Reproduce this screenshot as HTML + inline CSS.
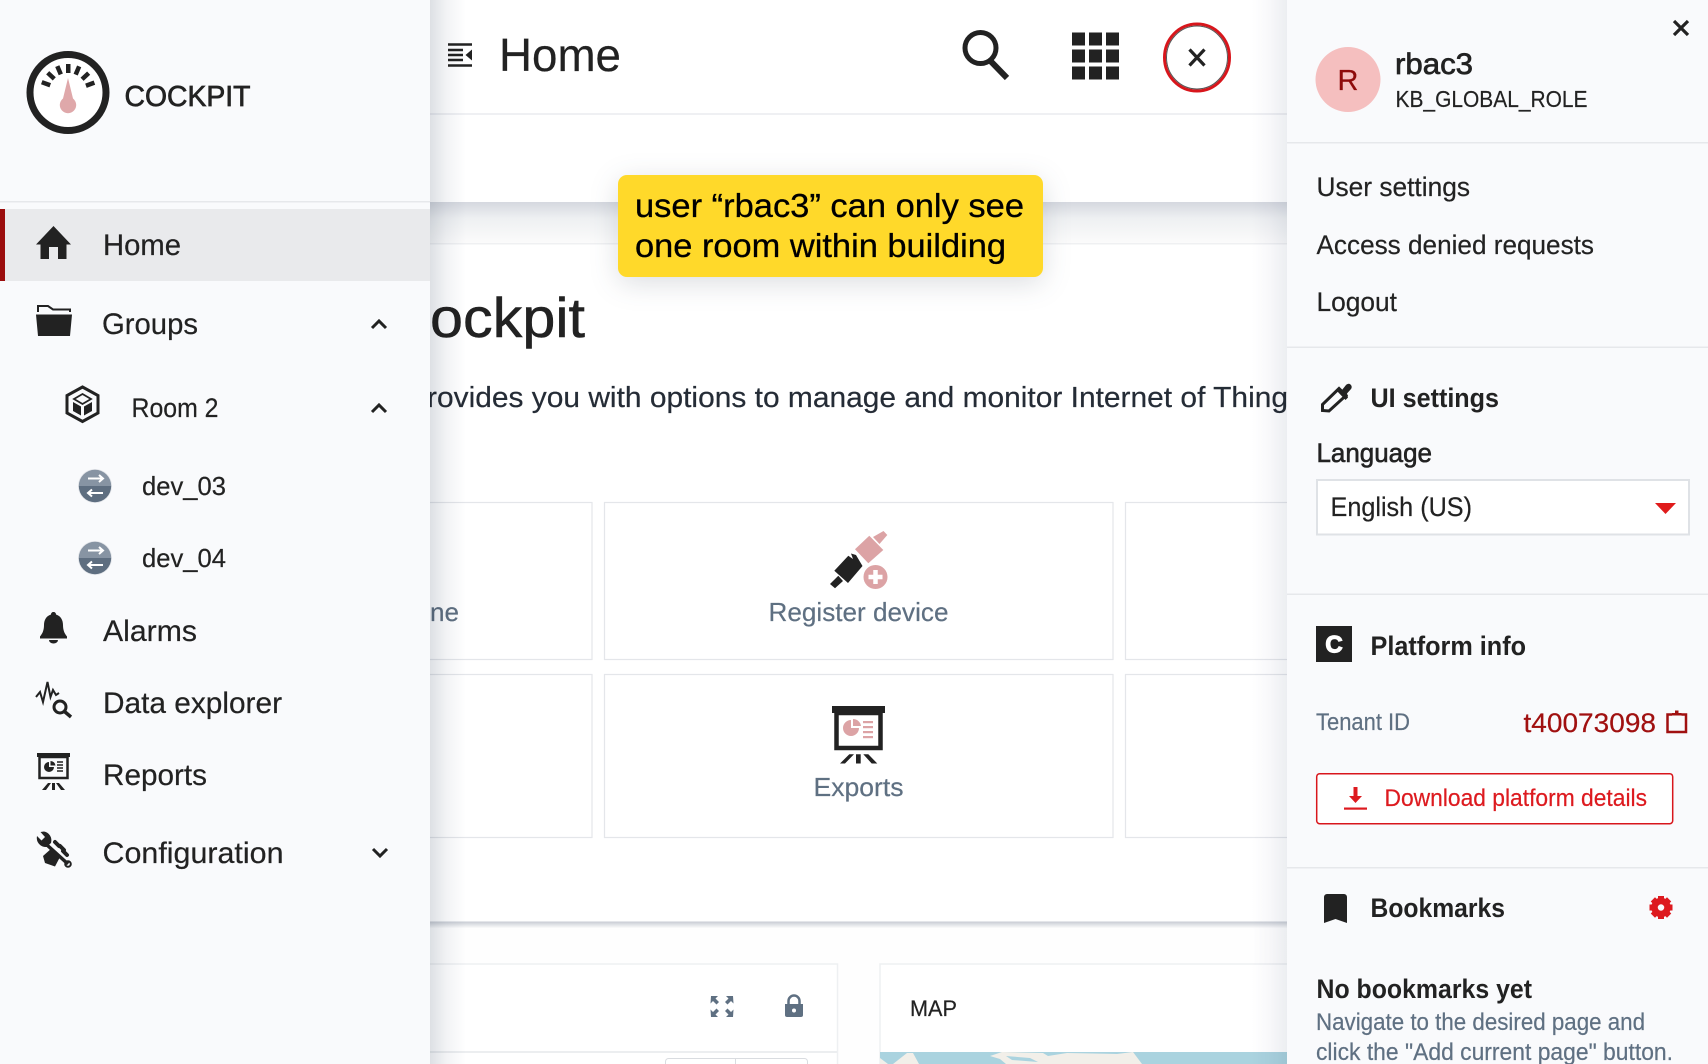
<!DOCTYPE html>
<html lang="en">
<head>
<meta charset="utf-8">
<title>Cockpit Home</title>
<style>
html,body{margin:0;padding:0;background:#fff;width:1708px;height:1064px;overflow:hidden}
svg{display:block}
text{font-family:"Liberation Sans",sans-serif;fill:#222;stroke:#222;stroke-width:.2}
.m{stroke:#222;stroke-width:.5}
.b{font-weight:700;stroke-width:0}
.g{fill:#5f7082;stroke:#5f7082}
.y{fill:#000;stroke:#000;stroke-width:.3}
.red{fill:#dd1a1f;stroke:#dd1a1f}
.drk{fill:#a01010;stroke:#a01010}
.mult{mix-blend-mode:multiply}
</style>
</head>
<body>
<svg width="1708" height="1064" viewBox="0 0 1708 1064" xmlns="http://www.w3.org/2000/svg">
<defs>
<linearGradient id="sh1" x1="0" y1="0" x2="0" y2="1"><stop offset="0" stop-color="#d5d8df"/><stop offset=".4" stop-color="#eef0f2"/><stop offset="1" stop-color="#fbfbfb"/></linearGradient>
<linearGradient id="sh2" x1="0" y1="0" x2="0" y2="1"><stop offset="0" stop-color="#c6cbd3"/><stop offset=".3" stop-color="#d8dbe0"/><stop offset="1" stop-color="#fff"/></linearGradient>
<linearGradient id="sl" x1="0" y1="0" x2="1" y2="0"><stop offset="0" stop-color="#dde0e4"/><stop offset=".45" stop-color="#f2f3f5"/><stop offset="1" stop-color="#fff"/></linearGradient>
<linearGradient id="sr" x1="1" y1="0" x2="0" y2="0"><stop offset="0" stop-color="#eceef1"/><stop offset=".5" stop-color="#f8f8fa"/><stop offset="1" stop-color="#fff"/></linearGradient>
<clipPath id="main"><rect x="430" y="0" width="857" height="1064"/></clipPath>
</defs>

<!-- MAIN CONTENT -->
<g clip-path="url(#main)">
<rect x="430" y="0" width="857" height="1064" fill="#fff"/>
<rect x="430" y="113" width="857" height="2" fill="#eff0f3"/>
<rect x="430" y="202" width="857" height="41" fill="url(#sh1)"/>
<rect x="430" y="243" width="857" height="1.500" fill="#eff0f2"/>

<text x="430" y="337" font-size="56" textLength="155" lengthAdjust="spacingAndGlyphs" class="m">ockpit</text>
<text x="427" y="407" font-size="29" textLength="861" lengthAdjust="spacingAndGlyphs" style="fill:#252c36;stroke:#252c36">rovides you with options to manage and monitor Internet of Thing</text>

<!-- cards -->
<g fill="#fff" stroke="#e4e6ea" stroke-width="1.2">
<rect x="400" y="502.500" width="192" height="157"/>
<rect x="604.500" y="502.500" width="508.500" height="157"/>
<rect x="1125.500" y="502.500" width="200" height="157"/>
<rect x="400" y="674.500" width="192" height="163"/>
<rect x="604.500" y="674.500" width="508.500" height="163"/>
<rect x="1125.500" y="674.500" width="200" height="163"/>
</g>
<text x="430" y="621" font-size="26" textLength="29" lengthAdjust="spacingAndGlyphs" class="g">ne</text>
<text x="768.500" y="621" font-size="26" textLength="180" lengthAdjust="spacingAndGlyphs" class="g">Register device</text>
<text x="813.500" y="796" font-size="26" textLength="90" lengthAdjust="spacingAndGlyphs" class="g">Exports</text>

<!-- register device icon -->
<g fill="#dca3a5">
<path d="M855 549.300 L869.300 535.700 L883.300 550 L868.300 563.300 Z"/>
<path d="M873 537 L883.500 531 L887.300 535 L879.500 544 Z"/>
<circle cx="875.500" cy="577" r="12"/>
</g>
<path d="M875.500 570 V584 M868.500 577 H882.500" stroke="#fff" stroke-width="4.500" fill="none"/>
<g fill="#222">
<path d="M834.300 570.700 L848.300 555.700 L853 559 L851 553.500 L856 555 L862.500 566 L848 583 Z"/>
<path d="M830 584 L838.300 575.700 L843 581 L835 588.300 Z"/>
</g>
<!-- exports icon -->
<rect x="832" y="706" width="53" height="7" fill="#222"/>
<rect x="836.500" y="713" width="44" height="35" fill="#fff" stroke="#222" stroke-width="4.500"/>
<g fill="#dca3a5">
<path d="M851 720 a8 8 0 1 0 8 8 h-8 Z"/>
<path d="M853 719 a8 8 0 0 1 8 7 h-8 Z"/>
<rect x="863" y="721" width="10" height="2.200"/>
<rect x="863" y="726" width="10" height="2.200"/>
<rect x="863" y="731" width="10" height="2.200"/>
<rect x="863" y="736" width="10" height="2.200"/>
</g>
<path d="M840 763.500 L849.300 754.300 H854 L845 763.500 Z M856 754.300 H860.700 V763.500 H856 Z M863.300 754.300 H868.300 L877.300 763.500 H871.700 Z" fill="#222"/>

<!-- lower section -->
<rect x="430" y="921.500" width="857" height="7" fill="url(#sh2)"/>
<rect x="430" y="928.500" width="857" height="135.500" fill="#fefefe"/>
<rect x="420" y="964" width="417.500" height="110" fill="#fff" stroke="#eef0f2" stroke-width="1.500"/>
<rect x="880" y="964" width="420" height="110" fill="#fff" stroke="#eef0f2" stroke-width="1.500"/>
<rect x="420" y="1051" width="417" height="2" fill="#eceef0"/>
<rect x="665.500" y="1058.500" width="142" height="12" rx="3" fill="#fff" stroke="#d9dce0"/>
<path d="M735.500 1058 V1064" stroke="#d9dce0"/>
<text x="910" y="1016" font-size="22" textLength="47" lengthAdjust="spacingAndGlyphs">MAP</text>
<g fill="#5f7082">
<path d="M711 996 h7 l-2.500 2.500 l3.500 3.500 l-2.500 2.500 l-3.500 -3.500 l-2.500 2.500 Z"/>
<path d="M733 996 h-7 l2.500 2.500 l-3.500 3.500 l2.500 2.500 l3.500 -3.500 l2.500 2.500 Z"/>
<path d="M711 1017 h7 l-2.500 -2.500 l3.500 -3.500 l-2.500 -2.500 l-3.500 3.500 l-2.500 -2.500 Z"/>
<path d="M733 1017 h-7 l2.500 -2.500 l-3.500 -3.500 l2.500 -2.500 l3.500 3.500 l2.500 -2.500 Z"/>
<path d="M785 1004 h18 v11 a2 2 0 0 1 -2 2 h-14 a2 2 0 0 1 -2 -2 Z"/>
</g>
<path d="M788.500 1004 v-3 a5.500 5.500 0 0 1 11 0 v3" fill="none" stroke="#5f7082" stroke-width="2.500"/>
<circle cx="794" cy="1010.500" r="2" fill="#fff"/>
<rect x="880" y="1052" width="407" height="12" fill="#aad3df"/>
<path d="M880 1064 V1058 L888 1064 Z M893 1064 L907 1053 L913 1053 L919 1064 Z M990 1056 L1002 1052 L1043 1053 L1048 1056 L1067 1053 L1117 1054 L1133 1052 L1142 1064 L1006 1064 L1000 1059 Z" fill="#f2efe9"/>
<path d="M1006 1056 L1030 1058 L1038 1062 L1012 1060 Z" fill="#aad3df"/>

<!-- header -->
<text x="499" y="71" font-size="46" textLength="122" lengthAdjust="spacingAndGlyphs">Home</text>
<g stroke="#222" stroke-width="2.500" fill="none">
<path d="M448 44.500 H472 M448 50 H463 M448 55 H463 M448 60 H463 M448 65.500 H472"/>
</g>
<path d="M472 49.500 V60.500 L465.500 55 Z" fill="#222"/>
<circle cx="980.500" cy="48" r="15.500" fill="none" stroke="#222" stroke-width="5"/>
<path d="M990.500 61 L1007 78" stroke="#222" stroke-width="6"/>
<g fill="#222">
<rect x="1072" y="32.500" width="13" height="13"/><rect x="1089" y="32.500" width="13" height="13"/><rect x="1106" y="32.500" width="13" height="13"/>
<rect x="1072" y="49.500" width="13" height="13"/><rect x="1089" y="49.500" width="13" height="13"/><rect x="1106" y="49.500" width="13" height="13"/>
<rect x="1072" y="66.500" width="13" height="13"/><rect x="1089" y="66.500" width="13" height="13"/><rect x="1106" y="66.500" width="13" height="13"/>
</g>
<ellipse cx="1197" cy="57.500" rx="32.500" ry="33.500" fill="#fff" stroke="#d8161c" stroke-width="3"/>
<ellipse cx="1197" cy="57.500" rx="30.500" ry="31.500" fill="none" stroke="#555" stroke-width="1"/>
<path d="M1189.500 49.500 L1204.500 65.500 M1204.500 49.500 L1189.500 65.500" stroke="#222" stroke-width="3.200"/>

<!-- shadows from drawers -->
<rect class="mult" x="430" y="0" width="36" height="1064" fill="url(#sl)"/>
<rect class="mult" x="1252" y="0" width="35" height="1064" fill="url(#sr)"/>

<!-- yellow callout -->
<rect x="618" y="175" width="425" height="102" rx="9" fill="#ffd92a" style="filter:drop-shadow(0 6px 14px rgba(40,50,70,.16))"/>
<text x="635" y="217" font-size="33" textLength="389" lengthAdjust="spacingAndGlyphs" class="y">user “rbac3” can only see</text>
<text x="635" y="257" font-size="33" textLength="371" lengthAdjust="spacingAndGlyphs" class="y">one room within building</text>
</g>

<!-- LEFT SIDEBAR -->
<rect x="0" y="0" width="430" height="1064" fill="#f9fafc"/>
<rect x="0" y="201" width="430" height="1.500" fill="#e6e8eb"/>
<rect x="0" y="209" width="430" height="72" fill="#e9eaec"/>
<rect x="0" y="209" width="5" height="72" fill="#9b0d0d"/>

<circle cx="68" cy="92.500" r="38" fill="#fff" stroke="#222" stroke-width="7"/>
<g fill="#222">
<rect x="66" y="64" width="4.500" height="9" transform="rotate(-70 68 92)"/>
<rect x="66" y="64" width="4.500" height="9" transform="rotate(-47 68 92)"/>
<rect x="66" y="64" width="4.500" height="9" transform="rotate(-23 68 92)"/>
<rect x="66" y="64" width="4.500" height="9"/>
<rect x="66" y="64" width="4.500" height="9" transform="rotate(23 68 92)"/>
<rect x="66" y="64" width="4.500" height="9" transform="rotate(47 68 92)"/>
<rect x="66" y="64" width="4.500" height="9" transform="rotate(70 68 92)"/>
</g>
<path d="M68 78 L63 98.500 A8.200 8.200 0 1 0 73 98.500 Z" fill="#dfa8aa"/>
<text x="124.500" y="106" font-size="29" textLength="126" lengthAdjust="spacingAndGlyphs" class="m" style="stroke-width:.7">COCKPIT</text>

<!-- Home -->
<path d="M53.500 226 L71 244.500 H66.500 V259 H58 V247 H49 V259 H40.500 V244.500 H36 Z" fill="#222"/>
<text x="103" y="255" font-size="30" textLength="78" lengthAdjust="spacingAndGlyphs">Home</text>

<!-- Groups -->
<path d="M38 312 V306 H48 L53 309.500 H70 V312" fill="none" stroke="#222" stroke-width="2"/>
<path d="M36 314.500 H72 L70 336 H38 Z" fill="#222"/>
<text x="102" y="334" font-size="30" textLength="96" lengthAdjust="spacingAndGlyphs">Groups</text>
<path d="M372 328 L379 321 L386 328" fill="none" stroke="#222" stroke-width="3"/>

<!-- Room 2 -->
<path d="M82.500 387 L98 395.500 V413 L82.500 421.500 L67 413 V395.500 Z" fill="none" stroke="#222" stroke-width="3"/>
<path d="M82.500 394 L91 399 L82.500 404 L74 399 Z" fill="none" stroke="#222" stroke-width="1.800"/>
<path d="M73 402 L81 406.500 V415.500 L73 411 Z M92 402 L84 406.500 V415.500 L92 411 Z" fill="#222"/>
<text x="131.500" y="417" font-size="27" textLength="87" lengthAdjust="spacingAndGlyphs">Room 2</text>
<path d="M372 412 L379 405 L386 412" fill="none" stroke="#222" stroke-width="3"/>

<!-- devices -->
<g>
<circle cx="95" cy="486" r="17" fill="#e4e6ea"/>
<path d="M78.800 486 a16.200 16.200 0 0 1 32.400 0 Z" fill="#8794a3"/>
<path d="M78.800 486 a16.200 16.200 0 0 0 32.400 0 Z" fill="#5e6e80"/>
<path d="M88 478.500 H103 M99 475 L103 478.500 L99 482 M103 493 H88 M92 489.500 L88 493 L92 496.500" fill="none" stroke="#fff" stroke-width="2"/>
</g>
<g transform="translate(0 72)">
<circle cx="95" cy="486" r="17" fill="#e4e6ea"/>
<path d="M78.800 486 a16.200 16.200 0 0 1 32.400 0 Z" fill="#8794a3"/>
<path d="M78.800 486 a16.200 16.200 0 0 0 32.400 0 Z" fill="#5e6e80"/>
<path d="M88 478.500 H103 M99 475 L103 478.500 L99 482 M103 493 H88 M92 489.500 L88 493 L92 496.500" fill="none" stroke="#fff" stroke-width="2"/>
</g>
<text x="142" y="495" font-size="26" textLength="84" lengthAdjust="spacingAndGlyphs">dev_03</text>
<text x="142" y="567" font-size="26" textLength="84" lengthAdjust="spacingAndGlyphs">dev_04</text>

<!-- Alarms -->
<path d="M53.500 612 c-1.500 0 -2.500 1 -2.500 2.500 c-5 1.500 -7 6 -7 10.500 c0 6 -2 9 -4 11.500 v2 h27 v-2 c-2 -2.500 -4 -5.500 -4 -11.500 c0 -4.500 -2 -9 -7 -10.500 c0 -1.500 -1 -2.500 -2.500 -2.500 Z M49 640 h9 a4.500 3.500 0 0 1 -9 0 Z" fill="#222"/>
<text x="103" y="641" font-size="30" textLength="94" lengthAdjust="spacingAndGlyphs">Alarms</text>

<!-- Data explorer -->
<path d="M36 697 L40 692 L43 702 L47.500 682 L50.500 697 L53 690 L56 695 L59 693" fill="none" stroke="#222" stroke-width="2"/>
<circle cx="60" cy="707" r="6" fill="none" stroke="#222" stroke-width="3"/>
<path d="M64.500 711.500 L71 717" stroke="#222" stroke-width="3.500"/>
<text x="103" y="713" font-size="30" textLength="179" lengthAdjust="spacingAndGlyphs">Data explorer</text>

<!-- Reports -->
<rect x="37" y="753" width="33" height="4" fill="#222"/>
<rect x="39.500" y="757" width="28" height="21" fill="none" stroke="#222" stroke-width="2.500"/>
<path d="M49 762 a5 5 0 1 0 5 5 h-5 Z M50.500 761 a5 5 0 0 1 5 4.500 h-5 Z" fill="#222"/>
<path d="M57 762 H63 M57 765 H63 M57 768 H63 M57 771 H63" stroke="#222" stroke-width="1.500"/>
<path d="M42 790 L48 783 H51 L46 790 Z M52 783 H55 V790 H52 Z M56 783 H59 L65 790 H61 Z" fill="#222"/>
<text x="103" y="785" font-size="30" textLength="104" lengthAdjust="spacingAndGlyphs">Reports</text>

<!-- Configuration -->
<path d="M37 836 A9 9 0 0 0 46.500 847 L51 843 A9 9 0 0 0 44 831.500 L40.500 832 L45 837 L41.500 840.500 Z" fill="#222"/>
<path d="M47 845 L68 864" stroke="#222" stroke-width="3.500"/>
<circle cx="68" cy="864" r="2.800" fill="none" stroke="#222" stroke-width="2"/>
<path d="M43 856 L52 848 L60 857 L55 866.500 L45 863 Z" fill="#222"/>
<path d="M55 842 L59 846 M60 846 L64 850 M63 851 L67 855" stroke="#222" stroke-width="4" stroke-linecap="round"/>
<text x="102.500" y="863" font-size="30" textLength="181" lengthAdjust="spacingAndGlyphs">Configuration</text>
<path d="M373 849 L380 856 L387 849" fill="none" stroke="#222" stroke-width="3"/>

<!-- RIGHT DRAWER -->
<rect x="1287" y="0" width="421" height="1064" fill="#f9fafc"/>
<path d="M1674 21 L1688 35 M1688 21 L1674 35" stroke="#222" stroke-width="3.200"/>
<circle cx="1348" cy="79.500" r="32.500" fill="#f5bfbf"/>
<text x="1348" y="90" font-size="29" text-anchor="middle" style="fill:#8e0b0b;stroke:#8e0b0b">R</text>
<text x="1395" y="74" font-size="30" textLength="78" lengthAdjust="spacingAndGlyphs" class="m" style="stroke-width:.7">rbac3</text>
<text x="1395.500" y="107" font-size="23" textLength="192" lengthAdjust="spacingAndGlyphs">KB_GLOBAL_ROLE</text>
<rect x="1287" y="142" width="421" height="1.500" fill="#e6e8eb"/>
<text x="1316.500" y="196" font-size="27" textLength="153.500" lengthAdjust="spacingAndGlyphs">User settings</text>
<text x="1316.500" y="254" font-size="27" textLength="277.500" lengthAdjust="spacingAndGlyphs">Access denied requests</text>
<text x="1316.500" y="311" font-size="27" textLength="80.500" lengthAdjust="spacingAndGlyphs">Logout</text>
<rect x="1287" y="346.500" width="421" height="1.500" fill="#e6e8eb"/>

<!-- UI settings -->
<path d="M1322.500 410.500 V404.500 L1339 388.500 L1346 395.500 L1329 411 Z" fill="#f9fafc" stroke="#222" stroke-width="3"/>
<path d="M1337 391 L1342 390 L1346 385 A2.800 2.800 0 0 1 1351 389 L1347 393.500 L1348 397.500 L1345.500 400 Z" fill="#222"/>
<text x="1370.500" y="407" font-size="27" textLength="128.500" lengthAdjust="spacingAndGlyphs" class="b">UI settings</text>
<text x="1316.500" y="462" font-size="27" textLength="115.500" lengthAdjust="spacingAndGlyphs" class="m" style="stroke-width:.6">Language</text>
<rect x="1317" y="480" width="372" height="54.500" fill="#fff" stroke="#dfe2e6" stroke-width="2"/>
<text x="1330.500" y="516" font-size="27" textLength="141.500" lengthAdjust="spacingAndGlyphs">English (US)</text>
<path d="M1655 503 H1676 L1665.500 514 Z" fill="#e01b1b"/>
<rect x="1287" y="593.500" width="421" height="1.500" fill="#e6e8eb"/>

<!-- Platform info -->
<rect x="1316" y="626" width="36" height="36" fill="#222"/>
<text x="1334" y="652.500" font-size="24" text-anchor="middle" class="b" style="fill:#fff;stroke:#fff;stroke-width:1.200">C</text>
<text x="1370.500" y="655" font-size="27" textLength="155.500" lengthAdjust="spacingAndGlyphs" class="b">Platform info</text>
<text x="1316" y="730" font-size="24" textLength="94" lengthAdjust="spacingAndGlyphs" class="g">Tenant ID</text>
<text x="1523.500" y="732" font-size="27" textLength="132.500" lengthAdjust="spacingAndGlyphs" class="drk">t40073098</text>
<path d="M1672 714.500 H1667.500 V732 H1686 V714.500 H1681.500" fill="none" stroke="#a01010" stroke-width="2.500"/>
<path d="M1672 715.500 V713 H1675 V710.500 H1678.500 V713 H1681.500 V715.500 Z" fill="#a01010"/>
<rect x="1316.700" y="773.700" width="356" height="50" rx="3" fill="#fff" stroke="#d8161c" stroke-width="1.500"/>
<path d="M1355.500 787 V799" stroke="#dd1a1f" stroke-width="4"/>
<path d="M1349 796 H1362 L1355.500 803 Z" fill="#dd1a1f"/>
<rect x="1344" y="807.500" width="23" height="2.200" fill="#dd1a1f"/>
<text x="1384.500" y="806" font-size="24" textLength="262.500" lengthAdjust="spacingAndGlyphs" class="red">Download platform details</text>
<rect x="1287" y="867" width="421" height="1.500" fill="#e6e8eb"/>

<!-- Bookmarks -->
<path d="M1324 897 a3 3 0 0 1 3 -3 h17 a3 3 0 0 1 3 3 v26 l-11.500 -4 l-11.500 4 Z" fill="#222"/>
<text x="1370.500" y="917" font-size="27" textLength="134.500" lengthAdjust="spacingAndGlyphs" class="b">Bookmarks</text>
<g fill="#dd1a1f">
<circle cx="1661" cy="907.500" r="6.500" fill="none" stroke="#dd1a1f" stroke-width="6.500"/>
<rect x="1658" y="896" width="6" height="5"/>
<rect x="1658" y="896" width="6" height="5" transform="rotate(45 1661 907.500)"/>
<rect x="1658" y="896" width="6" height="5" transform="rotate(90 1661 907.500)"/>
<rect x="1658" y="896" width="6" height="5" transform="rotate(135 1661 907.500)"/>
<rect x="1658" y="896" width="6" height="5" transform="rotate(180 1661 907.500)"/>
<rect x="1658" y="896" width="6" height="5" transform="rotate(225 1661 907.500)"/>
<rect x="1658" y="896" width="6" height="5" transform="rotate(270 1661 907.500)"/>
<rect x="1658" y="896" width="6" height="5" transform="rotate(315 1661 907.500)"/>
</g>
<text x="1316.500" y="998" font-size="27" textLength="215.500" lengthAdjust="spacingAndGlyphs" class="b">No bookmarks yet</text>
<text x="1316" y="1030" font-size="24" textLength="329" lengthAdjust="spacingAndGlyphs" class="g">Navigate to the desired page and</text>
<text x="1316" y="1060" font-size="24" textLength="357" lengthAdjust="spacingAndGlyphs" class="g">click the "Add current page" button.</text>
</svg>
</body>
</html>
